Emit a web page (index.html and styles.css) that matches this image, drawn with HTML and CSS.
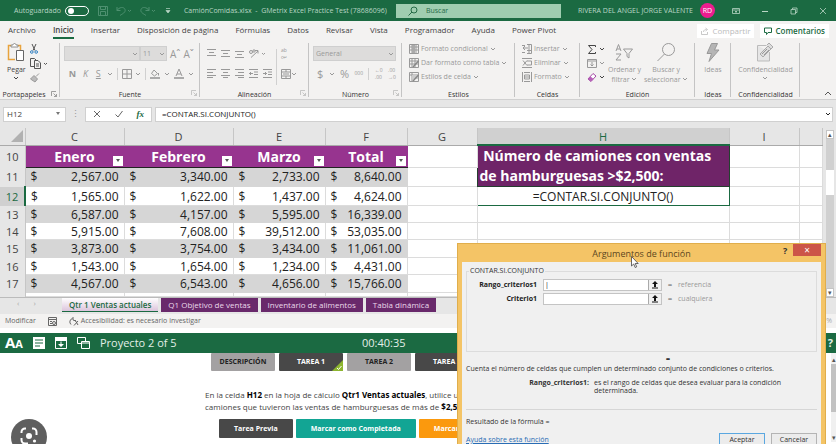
FILE: index.html
```html
<!DOCTYPE html>
<html lang="es">
<head>
    <meta charset="UTF-8">
    <meta name="viewport" content="width=device-width, initial-scale=1.0">
    <title>CamiónComidas.xlsx - GMetrix Excel Practice Test</title>
    <link rel="stylesheet" href="styles.css">
</head>
<body>
    <svg class="sprite" aria-hidden="true">
        <symbol id="caret" viewBox="0 0 6 6"><path d="M1 2l2 2 2-2" fill="none" stroke="currentColor"/></symbol>
        <symbol id="launcher" viewBox="0 0 6 6"><path d="M.5 5V.5H5M2.500 2.500l3 3M5.500 3v2.500H3" fill="none" stroke="currentColor" stroke-width=".8"/></symbol>
        <symbol id="up-arrow" viewBox="0 0 8 8"><path d="M4 0L1 3h2v3h2V3h2zM1 6.500h6v1H1z" fill="currentColor"/></symbol>
    </svg>

    <div class="app">
        <header class="titlebar">
            <span>Autoguardado</span>
            <label class="switch"><input type="checkbox" aria-label="Autoguardado"></label>
            <div class="quick">
                <svg width="10" height="10" viewBox="0 0 10 10"><path d="M.5.500h9v9h-9zM2.500.500v3h5v-3M2.500 9.500v-4h5v4" fill="none" stroke="currentColor"/></svg>
                <svg width="16" height="10" viewBox="0 0 16 10"><path d="M1 1v3.500h3.500M1 4.500C3 1 8 .500 9 3.500S6 8 4 9.500M12 4l1.500 1.500L15 4" fill="none" stroke="currentColor"/></svg>
                <svg width="16" height="10" viewBox="0 0 16 10"><path d="M9 1v3.500H5.500M9 4.500C7 1 2 .500 1 3.500S4 8 6 9.500M12 4l1.500 1.500L15 4" fill="none" stroke="currentColor"/></svg>
                <svg class="bright" width="6" height="6" viewBox="0 0 6 6"><path d="M1 .500h4M1 2.500h4L3 5z" fill="currentColor" stroke="currentColor" stroke-width=".7"/></svg>
            </div>
            <span class="doc">CamiónComidas.xlsx &nbsp;-&nbsp; GMetrix Excel Practice Test (78686096)</span>
            <div class="search">
                <svg width="10" height="10" viewBox="0 0 10 10"><circle cx="6" cy="4" r="3" fill="none" stroke="currentColor"/><path d="M4 6L.5 9.500" stroke="currentColor"/></svg>
                <input type="text" placeholder="Buscar" aria-label="Buscar">
            </div>
            <span class="user">RIVERA DEL ANGEL JORGE VALENTE</span>
            <span class="avatar">RD</span>
            <div class="window">
                <svg width="8" height="8" viewBox="0 0 8 8"><path d="M.5 1.500h7v5h-7zM.5 3h7M4 6V4M3 5l1-1 1 1" fill="none" stroke="currentColor" stroke-width=".8"/></svg>
                <svg width="8" height="8" viewBox="0 0 8 8"><path d="M1 4.500h6" stroke="currentColor"/></svg>
                <svg width="8" height="8" viewBox="0 0 8 8"><path d="M1 2.500h4.500V7H1zM2.500 2.500V1H7v4.500H5.500" fill="none" stroke="currentColor" stroke-width=".8"/></svg>
                <svg width="8" height="8" viewBox="0 0 8 8"><path d="M1 1l6 6M7 1L1 7" stroke="currentColor" stroke-width=".8"/></svg>
            </div>
        </header>

        <nav class="tabs">
            <a href="#">Archivo</a>
            <a href="#" class="current">Inicio</a>
            <a href="#">Insertar</a>
            <a href="#">Disposición de página</a>
            <a href="#">Fórmulas</a>
            <a href="#">Datos</a>
            <a href="#">Revisar</a>
            <a href="#">Vista</a>
            <a href="#">Programador</a>
            <a href="#">Ayuda</a>
            <a href="#">Power Pivot</a>
            <div class="share">
                <button class="off"><svg width="8" height="8" viewBox="0 0 8 8"><path d="M.5 4v3.500h6V5M2.500 5c0-2 1.500-2.500 3-2.500M4.500 1L6.500 2.500 4.500 4" fill="none" stroke="currentColor" stroke-width=".8"/></svg>Compartir</button>
                <button><svg width="8" height="8" viewBox="0 0 8 8"><path d="M.5 1h7v4.500H4L2.500 7.500v-2h-2z" fill="none" stroke="currentColor"/></svg>Comentarios</button>
            </div>
        </nav>

        <div class="ribbon">
            <section class="group">
                <div class="tools">
                    <button class="big dark">
                        <svg width="18" height="19" viewBox="0 0 18 19"><path d="M4 2.500H1.500v14H8M11 2.500h2.500V7" fill="none" stroke="#e8a33d" stroke-width="1.500"/><path d="M4 4V2h2c0-2 3-2 3 0h2v2z" fill="#fff" stroke="#777" stroke-width=".8"/><path d="M9.500 7.500h7v10h-7z" fill="#fff" stroke="#666"/></svg>
                        <span>Pegar</span>
                        <svg width="6" height="6"><use href="#caret"/></svg>
                    </button>
                    <div class="stack dark">
                        <svg width="8" height="10" viewBox="0 0 8 10"><path d="M2 0l3 6.500M6 0L3 6.500" stroke="#555"/><circle cx="1.800" cy="8" r="1.300" fill="none" stroke="#2f7fc1"/><circle cx="6.200" cy="8" r="1.300" fill="none" stroke="#2f7fc1"/></svg>
                        <svg width="18" height="11" viewBox="0 0 18 11"><path d="M4 8.500H.5v-8h4L6 2M4.500 2.500H8L10.500 5v5.500h-6zM6 6h3M6 8h3M14 5l1.500 1.500L17 5" fill="none" stroke="#555"/></svg>
                        <svg width="10" height="10" viewBox="0 0 10 10"><path d="M9 .5L6 3.500M4 2.500l3.500 3.500L5 9 .5 6z" fill="#bbb" stroke="#999"/></svg>
                    </div>
                </div>
                <h2>Portapapeles <svg width="6" height="6"><use href="#launcher"/></svg></h2>
            </section>

            <section class="group">
                <div class="lines">
                    <div class="line">
                        <div class="pick font"><select aria-label="Fuente"><option></option></select><svg width="6" height="6"><use href="#caret"/></svg></div>
                        <div class="pick size"><select aria-label="Tamaño"><option>11</option></select><svg width="6" height="6"><use href="#caret"/></svg></div>
                        <b class="glyph">Aˆ</b>
                        <b class="glyph">Aˇ</b>
                    </div>
                    <div class="line spread">
                        <button class="letter"><b>N</b></button>
                        <button class="letter"><i>K</i></button>
                        <button class="letter"><u>S</u></button>
                        <svg width="6" height="6"><use href="#caret"/></svg>
                        <i class="bar"></i>
                        <svg width="10" height="10" viewBox="0 0 10 10"><path d="M.5.500h9v9h-9zM5 .5v9M.5 5h9" fill="none" stroke="currentColor"/></svg>
                        <svg width="6" height="6"><use href="#caret"/></svg>
                        <i class="bar"></i>
                        <svg width="10" height="10" viewBox="0 0 10 10"><path d="M4 1l3.500 3.500L4.500 7 1.500 4.500zM8.500 4v2.500" fill="none" stroke="currentColor"/><path d="M0 8h10v2H0z" fill="#aaa"/></svg>
                        <svg width="6" height="6"><use href="#caret"/></svg>
                        <svg width="10" height="10" viewBox="0 0 10 10"><path d="M2 7L5 0l3 7M3 5h4" fill="none" stroke="currentColor"/><path d="M0 8h10v2H0z" fill="#aaa"/></svg>
                        <svg width="6" height="6"><use href="#caret"/></svg>
                    </div>
                </div>
                <h2>Fuente <svg class="corner" width="6" height="6"><use href="#launcher"/></svg></h2>
            </section>

            <section class="group">
                <div class="tools">
                    <div class="lines">
                        <div class="line wide">
                            <svg width="9" height="9" viewBox="0 0 9 9"><path d="M0 .5h9M2 3.500h5M0 6.500h9" stroke="currentColor"/></svg>
                            <svg width="9" height="9" viewBox="0 0 9 9"><path d="M0 1.500h9M2 4.500h5M0 7.500h9" stroke="currentColor"/></svg>
                            <svg width="9" height="9" viewBox="0 0 9 9"><path d="M0 2.500h9M2 5.500h5M0 8.500h9" stroke="currentColor"/></svg>
                            <svg width="17" height="9" viewBox="0 0 17 9"><path d="M2 8.500L9 2M6 1.500h3v3M13 4l1.500 1.500L16 4" fill="none" stroke="currentColor"/><circle cx="2" cy="3" r="1.500" fill="none" stroke="currentColor"/><circle cx="5" cy="2" r="1.200" fill="none" stroke="currentColor"/></svg>
                        </div>
                        <div class="line wide">
                            <svg width="9" height="9" viewBox="0 0 9 9"><path d="M0 .5h9M0 3.500h6M0 6.500h9M0 8.500h6" stroke="currentColor"/></svg>
                            <svg width="9" height="9" viewBox="0 0 9 9"><path d="M0 .5h9M2 3.500h5M0 6.500h9M2 8.500h5" stroke="currentColor"/></svg>
                            <svg width="9" height="9" viewBox="0 0 9 9"><path d="M0 .5h9M3 3.500h6M0 6.500h9M3 8.500h6" stroke="currentColor"/></svg>
                            <svg width="9" height="9" viewBox="0 0 9 9"><path d="M0 .5h9M5 3h4M5 5.500h4M0 8.500h9M4 4.500H0M2 3L.5 4.500 2 6" fill="none" stroke="currentColor"/></svg>
                            <svg width="9" height="9" viewBox="0 0 9 9"><path d="M0 .5h9M5 3h4M5 5.500h4M0 8.500h9M0 4.500h4M2 3l1.500 1.500L2 6" fill="none" stroke="currentColor"/></svg>
                        </div>
                    </div>
                    <i class="bar tall"></i>
                    <div class="lines">
                        <div class="line"><span class="mini">ab<br>c↵</span></div>
                        <div class="line">
                            <svg width="10" height="10" viewBox="0 0 10 10"><path d="M.5.500h9v9h-9zM.5 3h9M.5 7h9M5 .5V3M5 7v2.500M2 5h6" fill="none" stroke="currentColor"/></svg>
                            <svg width="6" height="6"><use href="#caret"/></svg>
                        </div>
                    </div>
                </div>
                <h2>Alineación <svg class="corner" width="6" height="6"><use href="#launcher"/></svg></h2>
            </section>

            <section class="group">
                <div class="lines">
                    <div class="line">
                        <div class="pick number"><select aria-label="Formato de número"><option>General</option></select><svg width="6" height="6"><use href="#caret"/></svg></div>
                    </div>
                    <div class="line spread">
                        <span class="sign">$</span>
                        <svg width="6" height="6"><use href="#caret"/></svg>
                        <span class="sign">%</span>
                        <span class="mini">000</span>
                        <i class="bar"></i>
                        <span class="mini">←0<br>.00</span>
                        <span class="mini">.00<br>→0</span>
                    </div>
                </div>
                <h2>Número <svg class="corner" width="6" height="6"><use href="#launcher"/></svg></h2>
            </section>

            <section class="group">
                <div class="list">
                    <button><svg width="10" height="10" viewBox="0 0 10 10"><path d="M.5.500h9v9h-9zM.5 3h9M.5 6h9M3 .5v9M7 .5v9" fill="none" stroke="currentColor"/><path d="M3 1h3v8H3z" fill="#aaa"/></svg>Formato condicional<svg width="6" height="6"><use href="#caret"/></svg></button>
                    <button><svg width="10" height="10" viewBox="0 0 10 10"><path d="M.5.500h9v9h-9zM.5 3h9M.5 6h9M3 .5v9M6 .5v9" fill="none" stroke="currentColor"/><path d="M9.500 3L4 9" stroke="#888" stroke-width="1.500"/></svg>Dar formato como tabla<svg width="6" height="6"><use href="#caret"/></svg></button>
                    <button><svg width="10" height="10" viewBox="0 0 10 10"><path d="M.5.500h9v9h-9zM.5 3h9M3 .5v9" fill="none" stroke="currentColor"/><path d="M3 3h6v4H3z" fill="#ccc"/><path d="M9.500 3L4 9" stroke="#888" stroke-width="1.500"/></svg>Estilos de celda<svg width="6" height="6"><use href="#caret"/></svg></button>
                </div>
                <h2>Estilos</h2>
            </section>

            <section class="group">
                <div class="list cells">
                    <button><svg width="10" height="10" viewBox="0 0 10 10"><path d="M0 1.500h3M5 .500h4.500v9H5M0 8.500h3M7 .5v9M5 6.500h5M6 4H1M3 2L1 4l2 2" fill="none" stroke="currentColor"/></svg>Insertar<svg width="6" height="6"><use href="#caret"/></svg></button>
                    <button><svg width="10" height="10" viewBox="0 0 10 10"><path d="M0 .5h10M0 9.500h10M5 3h4.500v4H5M1 2.500l4 5M5 2.500l-4 5" fill="none" stroke="currentColor"/></svg>Eliminar<svg width="6" height="6"><use href="#caret"/></svg></button>
                    <button><svg width="10" height="10" viewBox="0 0 10 10"><path d="M.5 0v10M9.500 0v10M2 .5h6M2 9.500h6M2.500 3h5v4h-5zM2 5h6" fill="none" stroke="currentColor"/></svg>Formato<svg width="6" height="6"><use href="#caret"/></svg></button>
                </div>
                <h2>Celdas</h2>
            </section>

            <section class="group">
                <div class="tools edit">
                    <div class="stack">
                        <div class="line dark"><svg width="10" height="9" viewBox="0 0 10 9"><path d="M8.500 2V.500H1.500L5 4.500l-3.500 4h7V7" fill="none" stroke="currentColor"/></svg><svg width="6" height="6"><use href="#caret"/></svg></div>
                        <div class="line"><svg width="10" height="9" viewBox="0 0 10 9"><path d="M.5.500h9v8h-9zM.5 2h9M5 3v4M3.500 5.500L5 7l1.500-1.500" fill="none" stroke="currentColor"/></svg><svg width="6" height="6"><use href="#caret"/></svg></div>
                        <div class="line dark"><svg width="10" height="9" viewBox="0 0 10 9"><path d="M6 .500l3 2.500-5 5.500L1 6z" fill="#fff" stroke="#a349a4"/><path d="M3.500 3.500l3 2.500L4 8.500 1 6z" fill="#b65fb8"/></svg><svg width="6" height="6"><use href="#caret"/></svg></div>
                    </div>
                    <button class="big">
                        <svg width="18" height="19" viewBox="0 0 18 19"><path d="M1 8l2.500-6.500L6 8M2 6h3M1 11h5l-5 6h5" fill="none" stroke="currentColor"/><path d="M8.500 6h9L14 10.500V15l-2-1.500v-3z" fill="none" stroke="currentColor"/></svg>
                        <span>Ordenar y</span>
                        <span>filtrar <svg width="6" height="6"><use href="#caret"/></svg></span>
                    </button>
                    <button class="big">
                        <svg width="18" height="19" viewBox="0 0 18 19"><circle cx="11.500" cy="6.500" r="6" fill="none" stroke="currentColor"/><path d="M7.500 11L.5 18" stroke="currentColor"/></svg>
                        <span>Buscar y</span>
                        <span>seleccionar <svg width="6" height="6"><use href="#caret"/></svg></span>
                    </button>
                </div>
                <h2>Edición</h2>
            </section>

            <section class="group">
                <div class="tools mid">
                    <button class="big">
                        <svg width="14" height="19" viewBox="0 0 14 19"><path d="M5.500.500h6L8.500 7h4.500L3 18.500l2.500-8H1z" fill="#b5b5b5" stroke="#999"/></svg>
                        <span>Ideas</span>
                    </button>
                </div>
                <h2>Ideas</h2>
            </section>

            <section class="group">
                <div class="tools mid">
                    <button class="big">
                        <svg width="18" height="19" viewBox="0 0 18 19"><path d="M1.500 2.500h9M1.500 2.500v15.500h12V9" fill="#e6e6e6" stroke="#bbb"/><path d="M4 11l8-8 3 3-8 8zM11 2l2-2 4 4-2 2" fill="#ddd" stroke="#aaa"/><path d="M6 11l5-5M8 12l5-5" stroke="#999"/></svg>
                        <span>Confidencialidad</span>
                        <svg width="6" height="6"><use href="#caret"/></svg>
                    </button>
                </div>
                <h2>Confidencialidad</h2>
            </section>

            <button class="collapse" aria-label="Contraer la cinta"><svg width="8" height="6" viewBox="0 0 8 6"><path d="M1 5l3-3 3 3" fill="none" stroke="currentColor"/></svg></button>
        </div>

        <div class="formula-bar">
            <div class="name-box">
                <input type="text" value="H12" aria-label="Cuadro de nombres">
                <svg width="6" height="4" viewBox="0 0 6 4"><path d="M1 0h4L3 3z" fill="#777"/></svg>
            </div>
            <span class="dots">⋮</span>
            <div class="fx">
                <svg width="8" height="8" viewBox="0 0 8 8"><path d="M1 1l6 6M7 1L1 7" stroke="#666"/></svg>
                <svg width="8" height="8" viewBox="0 0 8 8"><path d="M.5 4.500L3 7l4.500-6" fill="none" stroke="#666"/></svg>
                <em>fx</em>
            </div>
            <div class="formula">
                <input type="text" value="=CONTAR.SI.CONJUNTO()" aria-label="Barra de fórmulas">
                <svg width="6" height="6"><use href="#caret"/></svg>
            </div>
        </div>

        <div class="grid">
            <table class="sheet">
                <colgroup>
                    <col class="c-row"><col class="c-c"><col class="c-d"><col class="c-e"><col class="c-f"><col class="c-g"><col class="c-h"><col class="c-i"><col>
                </colgroup>
                <thead>
                    <tr>
                        <th><svg class="all" width="12" height="12" viewBox="0 0 12 12"><path d="M12 0v12H0z" fill="#b1b1b1"/></svg></th>
                        <th>C</th><th>D</th><th>E</th><th>F</th><th>G</th><th class="on">H</th><th>I</th><th></th>
                    </tr>
                </thead>
                <tbody>
                    <tr class="head">
                        <th>10</th>
                        <td class="month"><div>Enero<button aria-label="Filtrar Enero"></button></div></td>
                        <td class="month"><div>Febrero<button aria-label="Filtrar Febrero"></button></div></td>
                        <td class="month"><div>Marzo<button aria-label="Filtrar Marzo"></button></div></td>
                        <td class="month"><div>Total<button aria-label="Filtrar Total"></button></div></td>
                        <td></td>
                        <td class="question" rowspan="2">&nbsp;Número de camiones con ventas<br>de hamburguesas &gt;$2,500:</td>
                        <td></td><td></td>
                    </tr>
                    <tr class="tall band">
                        <th>11</th>
                        <td class="money"><div><span>$</span>2,567.00</div></td>
                        <td class="money"><div><span>$</span>3,340.00</div></td>
                        <td class="money"><div><span>$</span>2,733.00</div></td>
                        <td class="money"><div><span>$</span>8,640.00</div></td>
                        <td></td><td></td><td></td>
                    </tr>
                    <tr class="tall">
                        <th class="on">12</th>
                        <td class="money"><div><span>$</span>1,565.00</div></td>
                        <td class="money"><div><span>$</span>1,622.00</div></td>
                        <td class="money"><div><span>$</span>1,437.00</div></td>
                        <td class="money"><div><span>$</span>4,624.00</div></td>
                        <td></td><td class="active">=CONTAR.SI.CONJUNTO()</td><td></td><td></td>
                    </tr>
                    <tr class="band">
                        <th>13</th>
                        <td class="money"><div><span>$</span>6,587.00</div></td>
                        <td class="money"><div><span>$</span>4,157.00</div></td>
                        <td class="money"><div><span>$</span>5,595.00</div></td>
                        <td class="money"><div><span>$</span>16,339.00</div></td>
                        <td></td><td></td><td></td><td></td>
                    </tr>
                    <tr>
                        <th>14</th>
                        <td class="money"><div><span>$</span>5,915.00</div></td>
                        <td class="money"><div><span>$</span>7,608.00</div></td>
                        <td class="money"><div><span>$</span>39,512.00</div></td>
                        <td class="money"><div><span>$</span>53,035.00</div></td>
                        <td></td><td></td><td></td><td></td>
                    </tr>
                    <tr class="band">
                        <th>15</th>
                        <td class="money"><div><span>$</span>3,873.00</div></td>
                        <td class="money"><div><span>$</span>3,754.00</div></td>
                        <td class="money"><div><span>$</span>3,434.00</div></td>
                        <td class="money"><div><span>$</span>11,061.00</div></td>
                        <td></td><td></td><td></td><td></td>
                    </tr>
                    <tr>
                        <th>16</th>
                        <td class="money"><div><span>$</span>1,543.00</div></td>
                        <td class="money"><div><span>$</span>1,654.00</div></td>
                        <td class="money"><div><span>$</span>1,234.00</div></td>
                        <td class="money"><div><span>$</span>4,431.00</div></td>
                        <td></td><td></td><td></td><td></td>
                    </tr>
                    <tr class="band">
                        <th>17</th>
                        <td class="money"><div><span>$</span>4,567.00</div></td>
                        <td class="money"><div><span>$</span>6,543.00</div></td>
                        <td class="money"><div><span>$</span>4,656.00</div></td>
                        <td class="money"><div><span>$</span>15,766.00</div></td>
                        <td></td><td></td><td></td><td></td>
                    </tr>
                    <tr class="cut">
                        <th></th><td></td><td></td><td></td><td></td><td></td><td></td><td></td><td></td>
                    </tr>
                </tbody>
            </table>
            <div class="scroll">
                <button aria-label="Subir">▴</button>
                <i></i>
                <button aria-label="Bajar">▾</button>
            </div>
        </div>

        <div class="sheet-tabs">
            <span class="arrows"><span>‹</span><span>›</span></span>
            <button class="current">Qtr 1 Ventas actuales</button>
            <button>Q1 Objetivo de ventas</button>
            <button>Inventario de alimentos</button>
            <button>Tabla dinámica</button>
        </div>

        <div class="status">
            <span>Modificar</span>
            <svg width="9" height="9" viewBox="0 0 9 9"><path d="M.5.500h8v8h-8zM.5 2.500h8M2 4.500h2M2 6.500h2" fill="none" stroke="currentColor"/><circle cx="6" cy="6" r="1.500" fill="none" stroke="currentColor"/></svg>
            <span class="access"><svg width="10" height="9" viewBox="0 0 10 9"><path d="M3.500 1.500A3.500 3.500 0 0 0 2 7.500M4 0v3M4 3l3 1M6 3l3 5M9 4L5 8.500" fill="none" stroke="currentColor"/></svg>Accesibilidad: es necesario investigar</span>
            <span class="zoom">%</span>
        </div>

        <div class="project">
            <b class="text-size">A<small>A</small></b>
            <svg width="12" height="12" viewBox="0 0 12 12"><path d="M0 0h12v12H0z" fill="#fff"/><path d="M2 3h8M2 6h8M2 9h5" stroke="#1b6a42"/></svg>
            <svg width="12" height="12" viewBox="0 0 12 12"><path d="M.5.500h11v11H.5zM.5 3.500h11" fill="none" stroke="#fff"/><path d="M0 0h12v3H0zM5.500 4.500h1V7H9L6 10 3 7h2.500z" fill="#fff"/></svg>
            <svg width="13" height="12" viewBox="0 0 13 12"><path d="M4 6.500H.5V.500h8V4M4.500 4.500h8v7h-8zM4.500 6h8" fill="none" stroke="#fff"/></svg>
            <span class="name">Proyecto 2 of 5</span>
            <time>00:40:35</time>
            <span class="help">?</span>
        </div>

        <main class="task">
            <div class="task-body">
                <nav class="steps">
                    <button>DESCRIPCIÓN</button>
                    <button class="dark-step">TAREA 1<svg class="done" width="11" height="11" viewBox="0 0 11 11"><path d="M11 0v11H0z" fill="#8db52f"/><path d="M5 8l1.500 1.500L9.500 6" fill="none" stroke="#fff"/></svg></button>
                    <button>TAREA 2</button>
                    <button class="dark-step">TAREA 3</button>
                </nav>
                <p>En la celda <b>H12</b> en la hoja de cálculo <b>Qtr1 Ventas actuales</b>, utilice una función para contar los<br>camiones que tuvieron las ventas de hamburguesas de más de <b>$2,500</b>.</p>
                <div class="actions">
                    <button class="prev">Tarea Previa</button>
                    <button class="complete">Marcar como Completada</button>
                    <button class="review">Marcar para Revisar</button>
                </div>
            </div>
            <div class="scroll side">
                <button aria-label="Subir">▴</button>
                <i></i>
                <button aria-label="Bajar">▾</button>
            </div>
        </main>

        <button class="lens" aria-label="Buscar con la cámara">
            <svg width="18" height="18" viewBox="0 0 18 18"><path d="M1.500 6V5a3.500 3.500 0 0 1 3.500-3.500h1M12 1.500h1A3.500 3.500 0 0 1 16.500 5v3M1.500 11v2A3.500 3.500 0 0 0 5 16.500h3" fill="none" stroke="#fff" stroke-width="2"/><circle cx="9" cy="9" r="3" fill="#fff"/><circle cx="14.500" cy="14" r="1.600" fill="#fff"/></svg>
        </button>

        <form class="dialog">
            <div class="dialog-title">
                <h1>Argumentos de función</h1>
                <b>?</b>
                <button type="button" aria-label="Cerrar">×</button>
            </div>
            <div class="dialog-body">
                <fieldset>
                    <legend>CONTAR.SI.CONJUNTO</legend>
                    <div class="arg">
                        <label for="rango">Rango_criterios1</label>
                        <div class="ref"><input id="rango" type="text" value="|"><button type="button" aria-label="Seleccionar rango"><svg width="8" height="8"><use href="#up-arrow"/></svg></button></div>
                        <b>=</b><span>referencia</span>
                    </div>
                    <div class="arg">
                        <label for="criterio">Criterio1</label>
                        <div class="ref"><input id="criterio" type="text"><button type="button" aria-label="Seleccionar criterio"><svg width="8" height="8"><use href="#up-arrow"/></svg></button></div>
                        <b>=</b><span>cualquiera</span>
                    </div>
                </fieldset>
                <b class="equals">=</b>
                <p>Cuenta el número de celdas que cumplen un determinado conjunto de condiciones o criterios.</p>
                <div class="hint">
                    <b>Rango_criterios1:</b>
                    <span>es el rango de celdas que desea evaluar para la condición determinada.</span>
                </div>
                <p class="result">Resultado de la fórmula =</p>
                <div class="foot">
                    <a href="#">Ayuda sobre esta función</a>
                    <button type="button" class="ok">Aceptar</button>
                    <button type="button">Cancelar</button>
                </div>
            </div>
            <svg class="cursor" width="8" height="12" viewBox="0 0 8 12"><path d="M.5.500v9.500l2.200-2 1.500 3.500 1.500-.7L4.200 7.500h3z" fill="#fff" stroke="#444" stroke-width=".8"/></svg>
        </form>
    </div>
</body>
</html>
```
FILE: styles.css
```css
* {
    box-sizing: border-box;
}
body {
    font-family: "Open Sans", "Noto Sans", sans-serif;
    font-size: 7px;
    line-height: 10px;
    color: #444;
    background: #fff;
    margin: 0;
}
button, input, select {
    font: inherit;
    color: inherit;
    margin: 0;
    padding: 0;
    border: 0;
    background: none;
}
h1, h2, p {
    margin: 0;
    font-size: inherit;
    font-weight: normal;
}
a {
    color: inherit;
    text-decoration: none;
}
svg {
    flex: none;
}
.sprite {
    position: absolute;
    width: 0;
    height: 0;
}
.app {
    position: relative;
    height: 100vh;
    overflow: hidden;
}

/* title bar */
.titlebar {
    display: flex;
    align-items: center;
    height: 21px;
    padding: 0 9px 0 14px;
    background: #1b6a42;
    color: #b9d6c5;
    white-space: nowrap;
}
.switch {
    width: 24px;
    height: 10px;
    margin-left: 4px;
    padding: 1px 2px;
    border: 1px solid #fff;
    border-radius: 5px;
    display: flex;
}
.switch input {
    appearance: none;
    width: 6px;
    height: 6px;
    border-radius: 50%;
    background: #fff;
}
.quick {
    display: flex;
    align-items: center;
    gap: 8px;
    width: 95px;
    padding-left: 9px;
    color: #4e9070;
}
.quick .bright {
    margin-left: 1px;
    color: #b9d6c5;
}
.doc {
    width: 212px;
}
.search {
    display: flex;
    align-items: center;
    flex: 0 1 165px;
    gap: 8px;
    height: 14px;
    padding: 0 12px;
    background: #9fcdb0;
    color: #256b47;
}
.search input {
    width: 100%;
}
.search input::placeholder {
    color: #256b47;
}
.user {
    margin-left: auto;
}
.avatar {
    width: 15px;
    height: 15px;
    margin: 0 17px 0 7px;
    border-radius: 50%;
    background: #ec1c8e;
    color: #fff;
    text-align: center;
    line-height: 15px;
}
.window {
    display: flex;
    gap: 21px;
}

/* ribbon tabs */
.tabs {
    display: flex;
    align-items: center;
    gap: 17px;
    height: 20px;
    padding: 0 7px 0 8px;
    background: #f3f2f1;
    font-size: 8px;
    white-space: nowrap;
}
.tabs a {
    line-height: 14px;
    border-bottom: 2px solid transparent;
}
.tabs .current {
    font-weight: 600;
    border-color: #1b6a42;
}
.share {
    display: flex;
    gap: 6px;
    margin-left: auto;
}
.share button {
    display: flex;
    align-items: center;
    gap: 3px;
    height: 14px;
    padding: 0 4px;
    background: #fff;
    color: #1b6a42;
    font-weight: 600;
}
.share .off {
    color: #bbb;
    font-weight: normal;
}

/* ribbon */
.ribbon {
    display: grid;
    grid-template-columns: 60px 140px 109px 93px 113px 65px 115px 36px 69px 1fr;
    height: 59px;
    background: #f3f2f1;
    border-bottom: 1px solid #d0d0d0;
    color: #999;
    white-space: nowrap;
}
.group {
    display: flex;
    flex-direction: column;
    justify-content: space-between;
    position: relative;
    padding: 2px 0 0;
}
.group::after {
    content: "";
    position: absolute;
    right: 0;
    top: 2px;
    bottom: 2px;
    width: 1px;
    background: #c4c4c4;
}
.group h2 {
    color: #333;
    text-align: center;
    line-height: 9px;
}
.group h2 svg {
    margin-left: 4px;
    color: #888;
}
.group h2 .corner {
    position: absolute;
    right: 3px;
    bottom: 3px;
    color: #bbb;
}
.dark {
    color: #444;
}
.tools {
    display: flex;
    gap: 4px;
    padding-left: 7px;
}
.mid {
    justify-content: center;
    padding: 0;
}
.edit {
    gap: 3px;
}
.big {
    display: flex;
    flex-direction: column;
    align-items: center;
}
.big > svg:first-child {
    margin-bottom: 3px;
}
.stack {
    display: flex;
    flex-direction: column;
    align-items: flex-start;
    gap: 4px;
    padding-top: 1px;
}
.lines {
    display: flex;
    flex-direction: column;
    gap: 5px;
    padding: 3px 4px 0 4px;
}
.tools .lines {
    padding: 3px 0 0 0;
}
.line {
    display: flex;
    align-items: center;
    height: 15px;
}
.stack .line {
    height: 10px;
    gap: 2px;
}
.wide {
    gap: 5px;
}
.spread {
    justify-content: space-between;
    padding: 0 2px 0 4px;
}
.bar {
    width: 1px;
    height: 12px;
    background: #d0d0d0;
}
.bar.tall {
    height: 36px;
    margin: 6px 0 0 0;
}
.letter {
    width: 9px;
    font-size: 9px;
}
.glyph {
    font-size: 10px;
    font-weight: normal;
    margin-left: 3px;
}
.sign {
    font-size: 11px;
}
.mini {
    font-size: 5px;
    line-height: 7px;
}
.pick {
    position: relative;
    height: 15px;
    background: #dddcdb;
    border: 1px solid #cfcfcf;
}
.pick select {
    appearance: none;
    width: 100%;
    height: 13px;
    padding: 0 2px;
}
.pick svg {
    position: absolute;
    right: 1px;
    top: 4px;
}
.font {
    width: 76px;
}
.size {
    width: 27px;
}
.number {
    width: 83px;
}
.list {
    display: flex;
    flex-direction: column;
    gap: 4px;
    padding: 1px 0 0 7px;
}
.list button {
    display: flex;
    align-items: center;
    gap: 2px;
    height: 10px;
}
.collapse {
    align-self: end;
    justify-self: end;
    margin-right: 4px;
    color: #555;
}

/* formula bar */
.formula-bar {
    display: flex;
    align-items: center;
    height: 28px;
    padding: 0 3px;
    background: #e6e6e6;
    font-size: 8px;
}
.name-box, .fx, .formula {
    display: flex;
    align-items: center;
    height: 15px;
    background: #fff;
    border: 1px solid #d0d0d0;
}
.name-box {
    width: 63px;
    padding: 0 4px 0 3px;
}
.name-box input, .formula input {
    flex: 1;
    min-width: 0;
}
.dots {
    width: 19px;
    text-align: center;
    font-size: 9px;
    color: #999;
}
.fx {
    width: 67px;
    justify-content: space-between;
    padding: 0 7px;
    margin-right: 3px;
}
.fx em {
    font: italic bold 9px "Liberation Serif", serif;
    color: #1b6a42;
}
.formula {
    flex: 1;
    padding: 0 1px 0 6px;
    color: #222;
}

/* sheet */
.grid {
    display: flex;
    background: #e6e6e6;
}
.sheet {
    flex: 1;
    width: 0;
    table-layout: fixed;
    border-collapse: collapse;
    font-size: 12px;
    line-height: 15px;
    color: #222;
}
.c-row { width: 25px; }
.c-c { width: 99px; }
.c-d { width: 109px; }
.c-e { width: 92px; }
.c-f { width: 82px; }
.c-g { width: 70px; }
.c-h { width: 252px; }
.c-i { width: 70px; }
.sheet th {
    padding: 0;
    background: #e6e6e6;
    font-size: 11px;
    font-weight: normal;
    color: #444;
    border-right: 1px solid #c6c6c6;
}
.sheet thead th {
    height: 17px;
    border-bottom: 1px solid #aaa;
}
.all {
    display: block;
    margin-left: 11px;
}
.sheet .on {
    background: #d0d0d0;
    color: #1b6a42;
}
.sheet thead .on {
    border-bottom: 2px solid #1b6a42;
}
.sheet tbody .on {
    border-right: 2px solid #1b6a42;
}
.sheet tbody tr {
    height: 17px;
}
.sheet tbody tr:nth-child(n+6):nth-child(even) {
    height: 18px;
}
.sheet tbody .head {
    height: 22px;
}
.sheet tbody .tall {
    height: 19px;
}
.sheet tbody .cut {
    height: 4px;
}
.sheet td {
    padding: 0;
    background: #fff;
    border: 1px solid #dcdcdc;
}
.sheet .month {
    background: #97348f;
    color: #fff;
    font-size: 14px;
    font-weight: bold;
    text-align: center;
    border-color: #97348f;
    border-bottom: 1px solid #222;
}
.month div {
    position: relative;
}
.month button {
    position: absolute;
    right: 1px;
    bottom: -2px;
    width: 10px;
    height: 10px;
    background: #fff;
}
.month button::after {
    content: "";
    display: block;
    margin: 2px auto 0;
    width: 0;
    border: 2px solid transparent;
    border-top: 3px solid #555;
}
.money div {
    display: flex;
    justify-content: space-between;
    padding: 0 5px;
}
.band .money {
    background: #d6d6d6;
    border-color: #d6d6d6;
}
.sheet .question {
    padding: 0 2px;
    background: #6f2468;
    color: #fff;
    font-size: 14px;
    font-weight: bold;
    line-height: 20px;
    white-space: nowrap;
    border: 1px solid #24402f;
}
.sheet .active {
    border: 1px solid #1b6a42;
    text-align: center;
}
.scroll {
    display: flex;
    flex-direction: column;
    width: 13px;
    padding: 2px 2px 0 3px;
}
.scroll button {
    height: 9px;
    background: #fff;
    border: 1px solid #c4c4c4;
    line-height: 6px;
    color: #555;
}
.scroll i {
    flex: 1;
    border: solid #d0d0d0;
    border-width: 31px 0 93px;
    background: #fff;
}

/* sheet tabs */
.sheet-tabs {
    display: flex;
    gap: 3px;
    height: 17px;
    padding-bottom: 2px;
    background: #e6e6e6;
    border-top: 1px solid #bbb;
    font-size: 8px;
    white-space: nowrap;
}
.arrows {
    display: flex;
    gap: 14px;
    width: 59px;
    padding-left: 17px;
    color: #aaa;
}
.sheet-tabs button {
    padding: 0 7px;
    background: #69296b;
    color: #e9d9ea;
}
.sheet-tabs .current {
    background: linear-gradient(#fff, #dcc4dc);
    color: #1b6a42;
    font-weight: 600;
    border-bottom: 1px solid #1b6a42;
}

/* status bar */
.status {
    display: flex;
    align-items: center;
    gap: 12px;
    height: 14px;
    padding: 0 4px 0 5px;
    background: #f3f2f1;
    color: #666;
}
.access {
    display: flex;
    align-items: center;
    gap: 2px;
}
.zoom {
    margin-left: auto;
    color: #aaa;
}

/* project bar */
.project {
    display: flex;
    align-items: center;
    gap: 10px;
    height: 20px;
    margin-top: 5px;
    padding: 0 3px 0 5px;
    background: #1b6a42;
    color: #e3efe8;
    font-size: 11px;
}
.text-size {
    font-size: 15px;
    color: #fff;
}
.text-size small {
    font-size: 11px;
}
.project .name {
    width: 252px;
}
.project .help {
    margin-left: auto;
    font-weight: bold;
}

/* task panel */
.task {
    display: flex;
}
.task-body {
    flex: 1;
    min-width: 0;
    padding-left: 205px;
    white-space: nowrap;
    font-size: 8px;
    line-height: 12px;
}
.steps {
    display: flex;
    gap: 4px;
    padding-left: 6px;
}
.steps button {
    position: relative;
    width: 64px;
    height: 18px;
    background: #a3a1a2;
    color: #222;
    font-size: 7px;
    font-weight: bold;
    border-radius: 1px;
}
.steps .dark-step {
    background: #484848;
    color: #fff;
}
.done {
    position: absolute;
    right: 0;
    bottom: 0;
}
.task p {
    margin: 18px 0 6px;
}
.task p b {
    color: #000;
}
.actions {
    display: flex;
    gap: 3px;
    padding-left: 14px;
}
.actions button {
    height: 19px;
    padding: 0 15px;
    color: #fff;
    font-size: 7px;
    font-weight: bold;
    border-radius: 1px;
}
.actions .prev { background: #484848; }
.actions .complete { background: #12a594; }
.actions .review { background: #fb990d; }
.side {
    width: 5px;
    height: 89px;
    padding: 2px 0 0;
    background: #f0f0f0;
}
.side button {
    border: 0;
    background: none;
}
.side i {
    border-width: 0 0 21px;
    border-color: #f0f0f0;
    background: #c2c2c2;
}
.lens {
    position: absolute;
    left: 11px;
    bottom: -11px;
    width: 36px;
    height: 36px;
    border-radius: 50%;
    background: #5f5f5f;
}

/* function arguments dialog */
.dialog {
    position: absolute;
    top: 243px;
    right: 10px;
    width: 369px;
    padding: 0 4px;
    background: #f4c466;
    border: 1px solid #e0ae4c;
    color: #333;
}
.dialog-title {
    display: flex;
    justify-content: flex-end;
    height: 18px;
}
.dialog h1 {
    flex: 1;
    padding-left: 38px;
    text-align: center;
    font-size: 9px;
    line-height: 19px;
    color: #5c4620;
}
.dialog-title b {
    width: 10px;
    font-size: 9px;
    line-height: 13px;
}
.dialog-title button {
    width: 28px;
    height: 12px;
    background: #cc5548;
    color: #fff;
    font-size: 10px;
    line-height: 10px;
}
.dialog-body {
    height: 200px;
    padding: 4px;
    background: #f0f0f0;
}
fieldset {
    height: 86px;
    margin: 0;
    padding: 3px 0 0;
    border: 1px solid #dcdcdc;
}
legend {
    margin-left: 2px;
    padding: 0 1px;
}
.arg {
    display: grid;
    grid-template-columns: 70px 119px 4px auto;
    column-gap: 6px;
    align-items: center;
    margin-bottom: 2px;
    color: #999;
}
.arg label {
    text-align: right;
    font-weight: bold;
    color: #222;
}
.arg b {
    text-align: center;
}
.ref {
    display: flex;
    height: 12px;
    border: 1px solid #c4c4c4;
    background: #fff;
    color: #111;
}
.ref input {
    flex: 1;
    min-width: 0;
    padding-left: 1px;
}
.ref button {
    display: flex;
    align-items: center;
    justify-content: center;
    width: 13px;
    border-left: 1px solid #aaa;
    background: #f0f0f0;
}
.equals {
    display: block;
    padding-left: 200px;
    margin-top: 2px;
}
.hint {
    display: grid;
    grid-template-columns: 123px 200px;
    column-gap: 5px;
    margin-top: 5px;
    line-height: 8px;
}
.hint b {
    text-align: right;
}
.result {
    margin-top: 14px;
    padding-top: 7px;
    border-top: 1px solid #d6d6d6;
}
.foot {
    display: flex;
    align-items: center;
    gap: 6px;
    margin-top: 6px;
}
.foot a {
    margin-right: auto;
    color: #2a6db5;
    text-decoration: underline;
}
.foot button {
    width: 46px;
    height: 14px;
    background: #ececec;
    border: 1px solid #b4b4b4;
}
.foot .ok {
    border-color: #5aa7e0;
}
.cursor {
    position: absolute;
    left: 173px;
    top: 12px;
}
```
